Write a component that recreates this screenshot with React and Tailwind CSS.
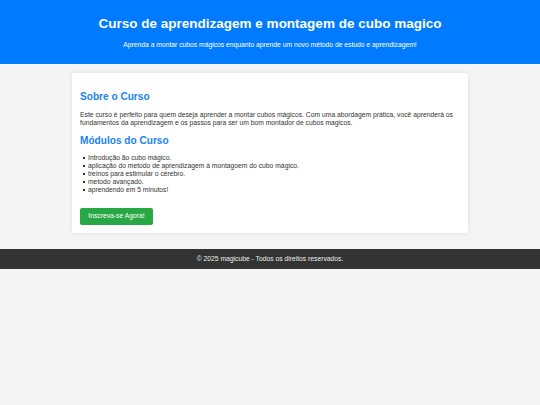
import React from 'react';

const modules = [
  'Introdução ão cubo mágico.',
  'aplicação do metodo de aprendizagem à montagoem do cubo mágico.',
  'treinos para estimular o cérebro.',
  'metodo avançado.',
  'aprendendo em 5 minutos!'
];

const App = () => {
  return (
    <div className="min-h-screen bg-[#f4f4f4] font-['Liberation_Sans',Arial,sans-serif] text-[#333] antialiased">
      {/* Header */}
      <header className="h-[64px] bg-[#007bff] text-white text-center pt-[16px]">
        <h1 className="text-[13.5px] leading-[16px] font-bold">Curso de aprendizagem e montagem de cubo magico</h1>
        <p className="mt-[8px] text-[6.75px] leading-[9px]">Aprenda a montar cubos mágicos enquanto aprende um novo método de estudo e aprendizagem!</p>
      </header>

      {/* Card */}
      <main className="pt-[9px] pb-[16px]">
        <section className="mx-auto w-[396px] bg-white p-[8px] shadow-[0_0_4px_rgba(0,0,0,0.1)] rounded-[2px]">
          <h2 className="mt-[9px] text-[10.1px] leading-[13px] font-bold text-[#1a84ee]">Sobre o Curso</h2>
          <p className="mt-[8px] text-[6.75px] leading-[8px] text-[#333]">
            Este curso é perfeito para quem deseja aprender a montar cubos mágicos. Com uma abordagem prática, você aprenderá os fundamentos da aprendizagem e os passos para ser um bom montador de cubos magicos.
          </p>
          <h2 className="mt-[7px] text-[10.1px] leading-[13px] font-bold text-[#1a84ee]">Módulos do Curso</h2>
          <ul className="mt-[7px] text-[6.75px] leading-[8px] text-[#333]">
            {modules.map((m) => (
              <li key={m} className="flex items-center">
                <span className="ml-[3px] mr-[3px] w-[2px] h-[2px] bg-[#333]" />
                {m}
              </li>
            ))}
          </ul>
          <button className="mt-[14px] h-[17px] w-[73px] bg-[#28a745] text-white text-[6.75px] rounded-[2px]">
            Inscreva-se Agora!
          </button>
        </section>
      </main>

      {/* Footer */}
      <footer className="h-[20px] bg-[#333] text-[#eee] text-center text-[6.75px] leading-[20px]">
        © 2025 magicube - Todos os direitos reservados.
      </footer>
    </div>
  );
};

export default App;
